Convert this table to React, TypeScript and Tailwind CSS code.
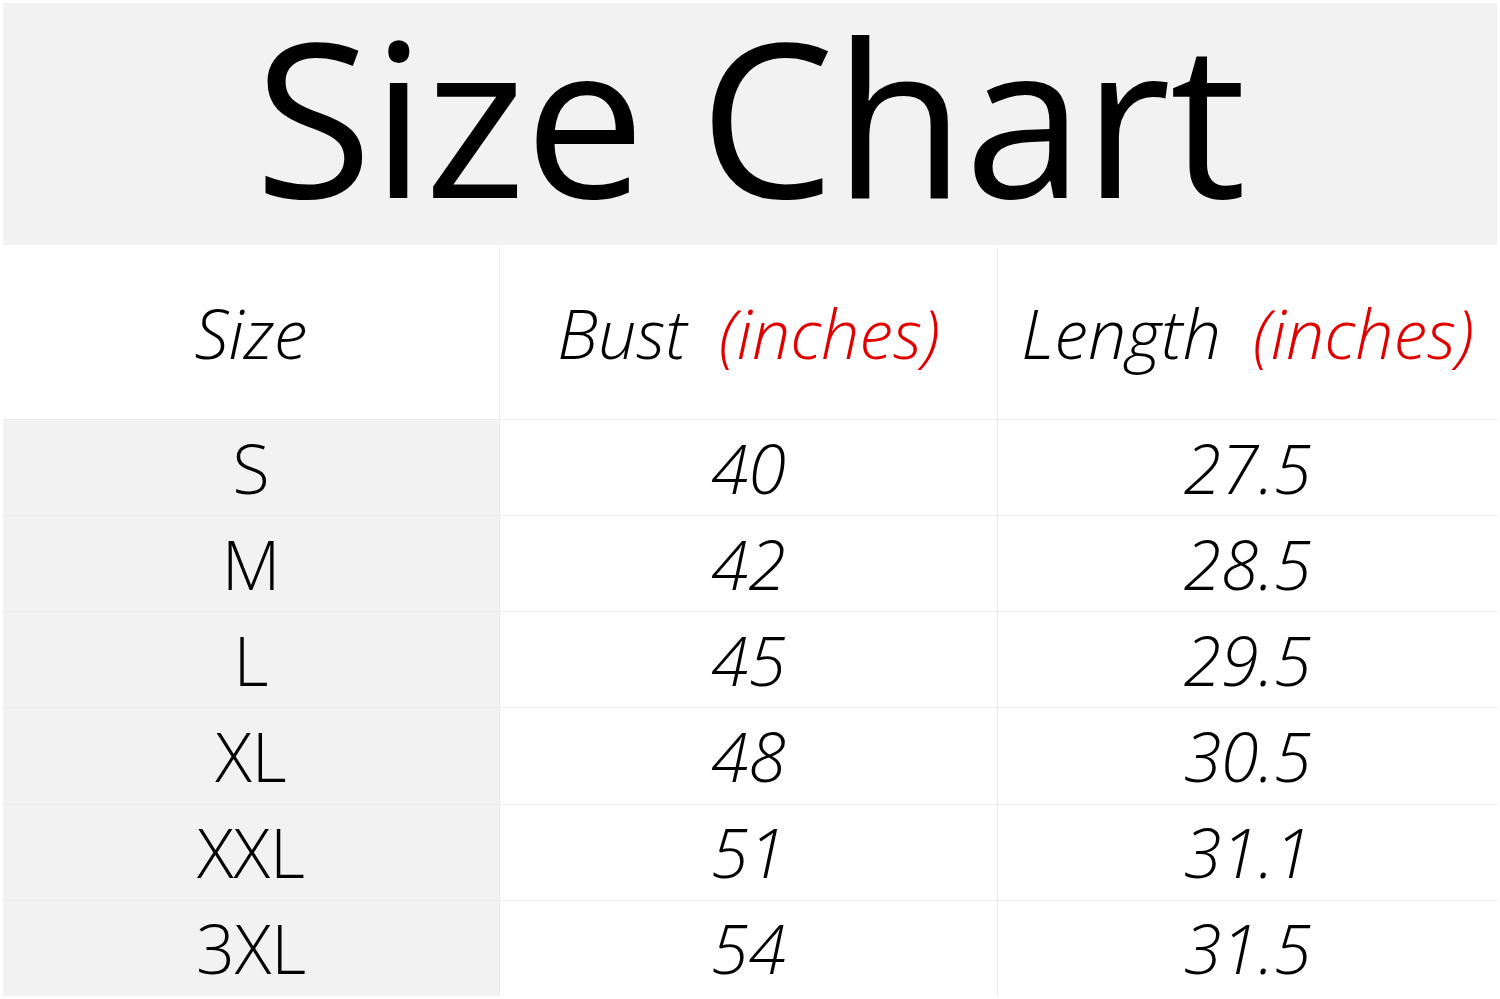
const rows = [
  { size: "S", bust: "40", length: "27.5" },
  { size: "M", bust: "42", length: "28.5" },
  { size: "L", bust: "45", length: "29.5" },
  { size: "XL", bust: "48", length: "30.5" },
  { size: "XXL", bust: "51", length: "31.1" },
  { size: "3XL", bust: "54", length: "31.5" },
];

function HeaderCell({ label, unit }: { label: string; unit?: string }) {
  return (
    <div className="flex items-center justify-center bg-white">
      <p className="text-[68px] font-light italic leading-none">
        {label}
        {unit && <span className="text-[#e00000] ml-[32px]">{unit}</span>}
      </p>
    </div>
  );
}

export default function App() {
  return (
    <div
      className="w-[1500px] h-[999px] bg-white p-[3px] flex flex-col gap-[2px] text-black"
      style={{ fontFamily: '"Open Sans", "DejaVu Sans", sans-serif' }}
    >
      <div className="h-[242px] bg-[#f2f2f2] flex items-center justify-center pb-[20px]">
        <h1 className="text-[215px] leading-[1] font-normal tracking-[-1px]">Size Chart</h1>
      </div>

      <div className="flex-1 grid grid-cols-[496px_497px_1fr] grid-rows-[172px_repeat(6,1fr)] gap-px bg-[#ebebeb]">
        <HeaderCell label="Size" />
        <HeaderCell label="Bust" unit="(inches)" />
        <HeaderCell label="Length" unit="(inches)" />

        {rows.map((r) => (
          <div key={r.size} className="contents">
            <div className="bg-[#f2f2f2] flex items-center justify-center">
              <p className="text-[68px] font-light leading-none">{r.size}</p>
            </div>
            <div className="bg-white flex items-center justify-center">
              <p className="text-[68px] font-light italic leading-none">{r.bust}</p>
            </div>
            <div className="bg-white flex items-center justify-center">
              <p className="text-[68px] font-light italic leading-none">{r.length}</p>
            </div>
          </div>
        ))}
      </div>
    </div>
  );
}
